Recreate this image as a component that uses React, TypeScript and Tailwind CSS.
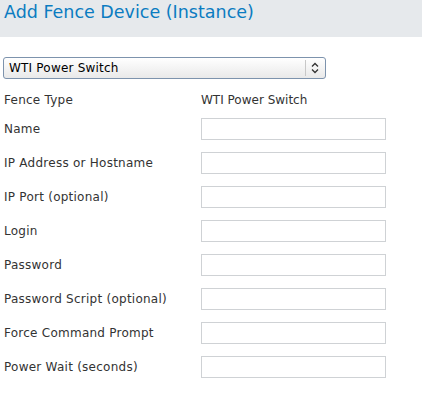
const fields = [
  "Name",
  "IP Address or Hostname",
  "IP Port (optional)",
  "Login",
  "Password",
  "Password Script (optional)",
  "Force Command Prompt",
  "Power Wait (seconds)",
];

export default function App() {
  return (
    <div className="w-[422px] h-[407px] bg-white text-[#333] font-['DejaVu_Sans',sans-serif]">
      <div className="h-[37px] bg-[#e6e9ec] pl-[4px] pt-[1px]">
        <h1 className="text-[17.5px] leading-[22px] text-[#0b7cc1]">Add Fence Device (Instance)</h1>
      </div>
      <div className="pl-[3px] pt-[20px]">
        <div className="flex items-center w-[323px] h-[22px] rounded-[3px] border border-[#7d93ad] bg-gradient-to-b from-white to-[#e9e9e9] text-[12px]">
          <span className="flex-1 pl-[5px] text-black tracking-[0.2px]">WTI Power Switch</span>
          <span className="h-[16px] border-l border-[#c8c8c8]" />
          <svg width="18" height="14" viewBox="0 0 18 14" className="mr-[1px]">
            <path d="M6 5.5 L9 2.5 L12 5.5 M6 8.5 L9 11.5 L12 8.5" fill="none" stroke="#333" strokeWidth="1.3" />
          </svg>
        </div>
      </div>
      <div className="pl-[4px] pt-[10px] text-[12px] tracking-[0.25px]">
        <div className="flex items-center h-[22px]">
          <span className="w-[197px]">Fence Type</span>
          <span className="tracking-normal">WTI Power Switch</span>
        </div>
        <div className="flex flex-col gap-[12px] mt-[7px]">
          {fields.map((f) => (
            <div key={f} className="flex items-center h-[22px]">
              <span className="w-[197px]">{f}</span>
              <input className="w-[185px] h-[22px] border border-[#cfd2d5] bg-white outline-none" />
            </div>
          ))}
        </div>
      </div>
    </div>
  );
}
